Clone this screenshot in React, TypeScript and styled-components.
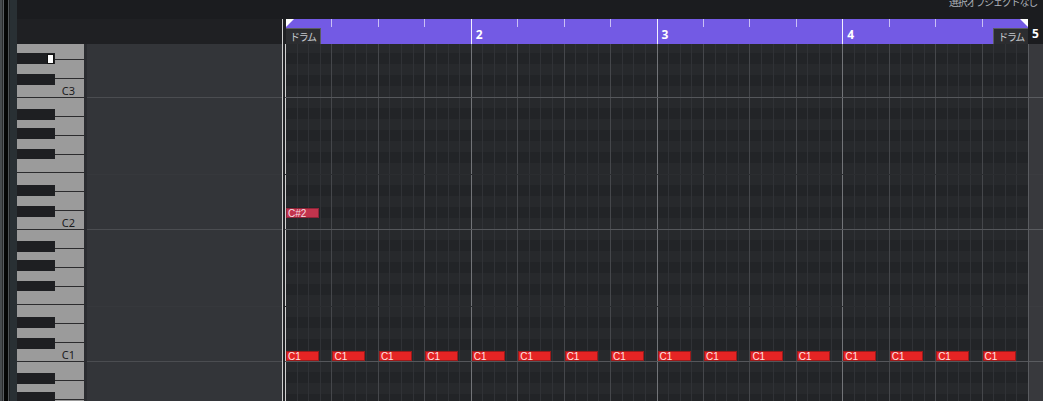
import React from "react";
import styled, { createGlobalStyle } from "styled-components";

const OCTAVE = 132;
const ROW = 11;
const BARS = 4;
const STEPS_PER_BAR = 16;
const BEAT_PX = 743 / (BARS * 4);
// C3 line sits 53px below the top of the note area
const C_LINE_OFFSET = 53;

const GlobalStyle = createGlobalStyle`
  html, body {
    margin: 0;
    padding: 0;
    background: #1b1c1f;
    overflow: hidden;
  }
  #root {
    width: 1043px;
    height: 401px;
  }
`;

const Frame = styled.div`
  display: flex;
  width: 1043px;
  height: 401px;
  overflow: hidden;
  font-family: "Noto Sans", "Noto Sans CJK JP", sans-serif;
`;

const EdgeStrip = styled.div`
  width: 17px;
  flex: none;
  background: linear-gradient(
    to right,
    #474a4d 0 2px,
    #2a2b2d 2px 3px,
    #5a5d60 3px 4px,
    #050505 4px 8px,
    #505356 8px 9px,
    #202225 9px 10px,
    #293034 10px 17px
  );
`;

const Editor = styled.div`
  flex: 1;
  display: flex;
  flex-direction: column;
  min-width: 0;
`;

const TopBar = styled.div`
  height: 19px;
  flex: none;
  background: #1b1c1f;
  display: flex;
  justify-content: flex-end;
  overflow: hidden;
`;

const Status = styled.span`
  font-family: "Noto Sans CJK JP", sans-serif;
  font-size: 10px;
  letter-spacing: -1.2px;
  line-height: 12px;
  color: #adb2b9;
  margin-top: -4px;
  padding-right: 6px;
`;

const HeaderRow = styled.div`
  height: 25px;
  flex: none;
  display: flex;
  background: #1f2023;
`;

const HeaderSpacer = styled.div`
  width: 265px;
  flex: none;
`;

const HeaderGap = styled.div`
  width: 4px;
  flex: none;
  box-sizing: border-box;
  border-left: 1px solid #cfcfcf;
`;

const Ruler = styled.div`
  position: relative;
  width: 742px;
  flex: none;
  display: flex;
  background: #735ae4;
`;

const RulerBar = styled.div<{ $first?: boolean }>`
  flex: 1;
  display: flex;
  flex-direction: column;
  box-sizing: border-box;
  border-left: ${(p) => (p.$first ? "none" : "1px solid #f2f0ff")};
`;

const TickRow = styled.div`
  height: 8px;
  display: flex;
`;

const Tick = styled.div<{ $first?: boolean }>`
  flex: 1;
  border-left: ${(p) => (p.$first ? "none" : "1px solid #c9c0f5")};
`;

const BarNumber = styled.span`
  font-size: 12px;
  font-weight: 700;
  color: #ffffff;
  line-height: 14px;
  padding: 1px 0 0 4px;
`;

const Corner = styled.div<{ $side: "left" | "right" }>`
  position: absolute;
  top: 0;
  ${(p) => p.$side}: 0;
  width: 0;
  height: 0;
  border-top: 8px solid #ffffff;
  ${(p) =>
    p.$side === "left"
      ? "border-right: 8px solid transparent;"
      : "border-left: 8px solid transparent;"}
`;

const TrackTag = styled.div<{ $side: "left" | "right" }>`
  position: absolute;
  bottom: 0;
  ${(p) => p.$side}: 0;
  height: 16px;
  box-sizing: border-box;
  padding: 0 4px;
  display: flex;
  align-items: center;
  background: #2c2d30;
  border-top: 1px solid #5a5c60;
  ${(p) =>
    p.$side === "left"
      ? "border-right: 1px solid #5a5c60;"
      : "border-left: 1px solid #5a5c60;"}
  font-family: "Noto Sans CJK JP", sans-serif;
  font-size: 10px;
  letter-spacing: -1.3px;
  color: #c4c8cd;
`;

const HeaderEnd = styled.div`
  width: 15px;
  flex: none;
  background: #1b1c1f;
  display: flex;
  align-items: flex-end;
`;

const EndNumber = styled(BarNumber)`
  padding: 0 0 3px 4px;
`;

const Body = styled.div`
  flex: 1;
  display: flex;
  min-height: 0;
`;

const Keyboard = styled.div`
  width: 67px;
  flex: none;
  overflow: hidden;
  display: flex;
  flex-direction: column;
`;

const OctaveBlock = styled.div<{ $lead?: boolean }>`
  position: relative;
  height: ${OCTAVE}px;
  flex: none;
  display: flex;
  flex-direction: column;
  margin-top: ${(p) => (p.$lead ? `${C_LINE_OFFSET - OCTAVE}px` : "0")};
`;

const WhiteKey = styled.div`
  flex: 1;
  box-sizing: border-box;
  border-top: 1px solid #2b2b2d;
  background: #9b9b9b;
  display: flex;
  align-items: flex-end;
  justify-content: flex-end;
  padding-right: 9px;
`;

const KeyLabel = styled.span`
  font-size: 11px;
  line-height: 13px;
  color: #1c1c1e;
`;

const BlackKey = styled.div<{ $top: number; $h: number }>`
  position: absolute;
  left: 0;
  top: ${(p) => p.$top}px;
  width: 38px;
  height: ${(p) => p.$h}px;
  background: #1e1f22;
`;

const KeyMarker = styled.div`
  position: absolute;
  right: 1px;
  top: 1px;
  width: 5px;
  height: 8px;
  background: #ffffff;
  border: 1px solid #111;
`;

const KeySeparator = styled.div`
  width: 3px;
  flex: none;
  background: #2a2c30;
`;

const lineLayer = (octave: string, ef: string) => `
  linear-gradient(
    to bottom,
    ${octave} 0 1px,
    transparent 1px 77px,
    ${ef} 77px 78px,
    transparent 78px ${OCTAVE}px
  )
`;

const EmptyPane = styled.div`
  width: 195px;
  flex: none;
  background: ${lineLayer("#4b4d51", "#36383c")}, #333539;
  background-size: 100% ${OCTAVE}px;
  background-position: 0 ${C_LINE_OFFSET}px;
`;

const StartGap = styled.div`
  width: 3px;
  flex: none;
  box-sizing: border-box;
  border-left: 1px solid #cfcfcf;
  background: #222326;
`;

// row shading, top to bottom: B A# A G# G F# F E D# D C# C
const blackRows = [1, 3, 5, 8, 10];
const rowShading = Array.from({ length: 12 }, (_, i) => {
  const c = blackRows.includes(i) ? "#222427" : "#27292c";
  return `${c} ${i * ROW}px ${(i + 1) * ROW}px`;
}).join(", ");

const Grid = styled.div`
  position: relative;
  width: 743px;
  flex: none;
  display: flex;
  background: linear-gradient(to bottom, ${rowShading});
  background-size: 100% ${OCTAVE}px;
  background-position: 0 ${C_LINE_OFFSET}px;

  &::after {
    content: "";
    position: absolute;
    inset: 0;
    pointer-events: none;
    background: ${lineLayer("#55575b", "#2b2d30")};
    background-size: 100% ${OCTAVE}px;
    background-position: 0 ${C_LINE_OFFSET}px;
  }
`;

const Step = styled.div<{ $kind: "start" | "bar" | "beat" | "step" }>`
  flex: 1;
  box-sizing: border-box;
  border-left: 1px solid
    ${(p) =>
      p.$kind === "start"
        ? "#cfcfcf"
        : p.$kind === "bar"
        ? "#727478"
        : p.$kind === "beat"
        ? "#45474b"
        : "#303236"};
`;

const Note = styled.div<{ $sharp?: boolean }>`
  position: absolute;
  z-index: 1;
  width: 33px;
  height: 10px;
  box-sizing: border-box;
  border: 1px solid ${(p) => (p.$sharp ? "#8e2438" : "#9c1a1a")};
  background: ${(p) => (p.$sharp ? "#c2344d" : "#e52424")};
  color: ${(p) => (p.$sharp ? "#f6dde2" : "#ffe4e4")};
  font-family: "Liberation Sans", sans-serif;
  font-size: 10px;
  line-height: 9px;
  padding-left: 1px;
  overflow: hidden;
  white-space: nowrap;
`;

const RightColumn = styled.div`
  flex: 1;
  box-sizing: border-box;
  border-left: 1px solid #5a5c60;
  background: ${lineLayer("#5a5c60", "#3b3c40")}, #38393d;
  background-size: 100% ${OCTAVE}px;
  background-position: 0 ${C_LINE_OFFSET}px;
`;

const blackKeys = [
  { top: 12, h: 11 },
  { top: 31, h: 11 },
  { top: 52, h: 10 },
  { top: 88, h: 11, name: "D#" },
  { top: 109, h: 11 },
];
const whiteNames = ["B", "A", "G", "F", "E", "D", "C"];
const octaves = [3, 2, 1, 0];

// semitones above C1, row top inside the note area
const rowTop = (semi: number) => C_LINE_OFFSET + 2 * OCTAVE + 1 - ROW - semi * ROW;

const notes = [
  { label: "C#2", semi: 13, beat: 0, sharp: true },
  ...Array.from({ length: 16 }, (_, i) => ({ label: "C1", semi: 0, beat: i, sharp: false })),
];

const steps = Array.from({ length: BARS * STEPS_PER_BAR }, (_, i) =>
  i === 0 ? "start" : i % 16 === 0 ? "bar" : i % 4 === 0 ? "beat" : "step"
) as ("start" | "bar" | "beat" | "step")[];

export default function App() {
  return (
    <>
      <GlobalStyle />
      <Frame>
        <EdgeStrip />
        <Editor>
          <TopBar>
            <Status>選択オブジェクトなし</Status>
          </TopBar>
          <HeaderRow>
            <HeaderSpacer />
            <HeaderGap />
            <Ruler>
              {[1, 2, 3, 4].map((bar) => (
                <RulerBar key={bar} $first={bar === 1}>
                  <TickRow>
                    {[0, 1, 2, 3].map((b) => (
                      <Tick key={b} $first={b === 0} />
                    ))}
                  </TickRow>
                  {bar > 1 && <BarNumber>{bar}</BarNumber>}
                </RulerBar>
              ))}
              <Corner $side="left" />
              <Corner $side="right" />
              <TrackTag $side="left">ドラム</TrackTag>
              <TrackTag $side="right">ドラム</TrackTag>
            </Ruler>
            <HeaderEnd>
              <EndNumber>5</EndNumber>
            </HeaderEnd>
          </HeaderRow>
          <Body>
            <Keyboard>
              {octaves.map((oct, idx) => (
                <OctaveBlock key={oct} $lead={idx === 0}>
                  {whiteNames.map((n) => (
                    <WhiteKey key={n}>
                      {n === "C" && oct > 0 && <KeyLabel>C{oct}</KeyLabel>}
                    </WhiteKey>
                  ))}
                  {blackKeys.map((k) => (
                    <BlackKey key={k.top} $top={k.top} $h={k.h}>
                      {oct === 3 && k.name === "D#" && <KeyMarker />}
                    </BlackKey>
                  ))}
                </OctaveBlock>
              ))}
            </Keyboard>
            <KeySeparator />
            <EmptyPane />
            <StartGap />
            <Grid>
              {steps.map((kind, i) => (
                <Step key={i} $kind={kind} />
              ))}
              {notes.map((n, i) => (
                <Note
                  key={i}
                  $sharp={n.sharp}
                  style={{ left: n.beat * BEAT_PX + 1, top: rowTop(n.semi) }}
                >
                  {n.label}
                </Note>
              ))}
            </Grid>
            <RightColumn />
          </Body>
        </Editor>
      </Frame>
    </>
  );
}
